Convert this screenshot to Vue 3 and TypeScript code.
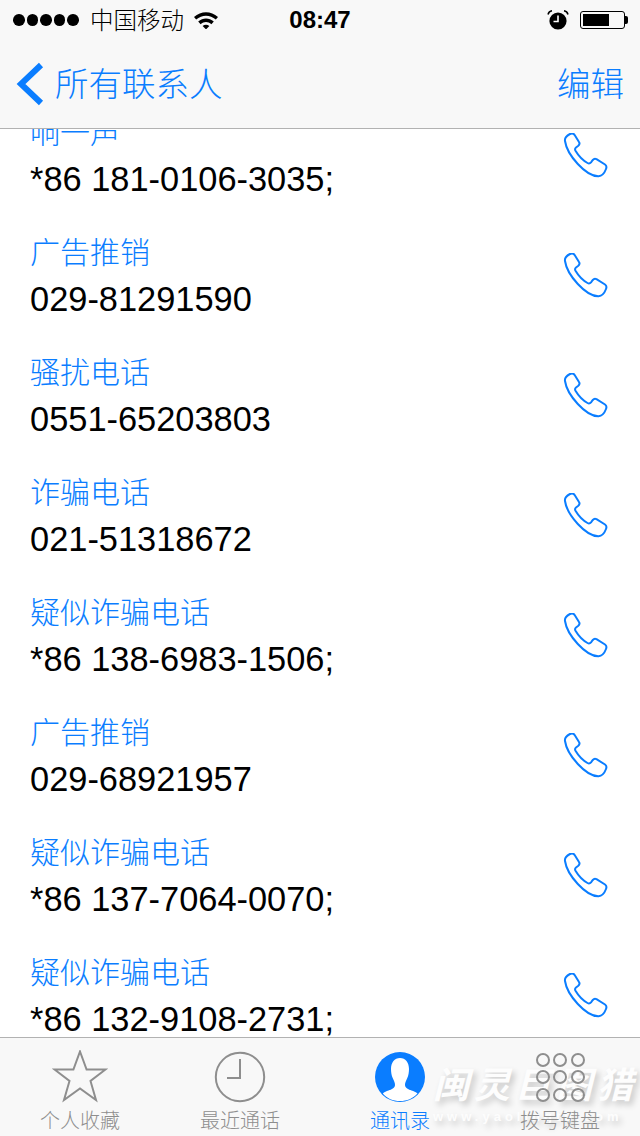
<script setup lang="ts">
interface Contact { name: string; phone: string }
const contacts: Contact[] = [
  { name: '响一声', phone: '*86 181-0106-3035;' },
  { name: '广告推销', phone: '029-81291590' },
  { name: '骚扰电话', phone: '0551-65203803' },
  { name: '诈骗电话', phone: '021-51318672' },
  { name: '疑似诈骗电话', phone: '*86 138-6983-1506;' },
  { name: '广告推销', phone: '029-68921957' },
  { name: '疑似诈骗电话', phone: '*86 137-7064-0070;' },
  { name: '疑似诈骗电话', phone: '*86 132-9108-2731;' },
]
const dial = [0, 1, 2, 3, 4, 5, 6, 7, 8]
</script>

<template>
  <div class="screen">
    <header class="header">
      <div class="status">
        <div class="status-left">
          <div class="dots"><i v-for="n in 5" :key="n" class="dot"></i></div>
          <span class="carrier">中国移动</span>
          <svg class="wifi" width="26" height="18" viewBox="0 0 26 18">
            <path d="M1 6C8 -.5 18 -.5 25 6L22.8 8.6C17 3.4 9 3.4 3.2 8.6Z" fill="#000"/>
            <path d="M5.2 10.6C10 6.4 16 6.4 20.8 10.6L18.4 13.2C15 10.4 11 10.4 7.6 13.2Z" fill="#000"/>
            <path d="M9.6 15C11.8 13.4 14.2 13.4 16.4 15L13 18.4Z" fill="#000"/>
          </svg>
        </div>
        <span class="time">08:47</span>
        <div class="status-right">
          <svg width="22" height="20" viewBox="0 0 22 20">
            <circle cx="11" cy="11" r="8.6" fill="#000"/>
            <path d="M11 5.5V11.5H6.5" stroke="#fff" stroke-width="1.6" fill="none"/>
            <path d="M1 4.5C1.5 2.5 3 1 5 .8M21 4.5C20.5 2.5 19 1 17 .8" stroke="#000" stroke-width="1.5" fill="none"/>
          </svg>
          <div class="battery"><div class="battery-fill"></div></div>
        </div>
      </div>
      <nav class="nav">
        <div class="back">
          <svg width="28" height="44" viewBox="0 0 28 44">
            <path d="M25 3L5 22L25 41" fill="none" stroke="#0a7dff" stroke-width="6"/>
          </svg>
          <span>所有联系人</span>
        </div>
        <span class="edit">编辑</span>
      </nav>
    </header>

    <main class="list">
      <div class="list-inner">
        <div v-for="(c, i) in contacts" :key="i" class="row">
          <div class="info">
            <div class="name">{{ c.name }}</div>
            <div class="phone">{{ c.phone }}</div>
          </div>
          <svg class="call" width="46" height="46" viewBox="0 1 46 46">
            <path d="M3 9C2.5 6 5 3.5 8 2C10 1 11.5 1.5 12.5 2.8L17 10C18 11.5 17.5 12.8 16 14L14 15.5C13 16.3 12.8 17.5 13.5 18.8C16 23 21 28.5 25.5 31C26.8 31.7 28 31.5 29 30.3L30.8 28C31.8 26.8 33 26.4 34.5 27.2L43 32.5C44.5 33.5 44.8 35 44 37C42.5 41 39.5 44 36.5 44.2C24 44.5 5 23 3 9Z" fill="none" stroke="#0a7dff" stroke-width="2"/>
          </svg>
        </div>
      </div>
    </main>

    <footer class="tabs">
      <div class="watermark" aria-hidden="true">
        <div class="wm-title">闽灵巨图猎</div>
        <div class="wm-url">www.yaolingtu.com</div>
      </div>
      <div class="tab">
        <svg width="56" height="54" viewBox="0 1.5 56 54">
          <path d="M28 3L34.6 21H53.5L38.5 32.5L44 51.5L28 40L12 51.5L17.5 32.5L2.5 21H21.4Z" fill="none" stroke="#8e8e8e" stroke-width="2"/>
        </svg>
        <span>个人收藏</span>
      </div>
      <div class="tab">
        <svg width="54" height="54" viewBox="0 0 54 54">
          <circle cx="27" cy="27" r="24.2" fill="none" stroke="#8e8e8e" stroke-width="2"/>
          <path d="M27 9V28H14" fill="none" stroke="#8e8e8e" stroke-width="2"/>
        </svg>
        <span>最近通话</span>
      </div>
      <div class="tab active">
        <svg width="54" height="54" viewBox="0 0 54 54">
          <circle cx="27" cy="27" r="25" fill="#0a7dff"/>
          <path d="M27 8C32.5 8 36 12.5 36 19C36 22 35.5 25.5 34.3 28C33 31 32 32.5 32 35C32 38 35.5 39.5 38.5 40.5C40.5 41.2 43 42 44.5 43.5C40 48.5 34 51 27 51C20 51 14 48.5 9.8 43.5C11.2 42 13.5 41.2 15.5 40.5C18.5 39.5 22 38 22 35C22 32.5 21 31 19.7 28C18.5 25.5 18 22 18 19C18 12.5 21.5 8 27 8Z" fill="#fff"/>
        </svg>
        <span>通讯录</span>
      </div>
      <div class="tab">
        <div class="dial"><i v-for="d in dial" :key="d"></i></div>
        <span>拨号键盘</span>
      </div>
    </footer>
  </div>
</template>

<style>
html, body { margin: 0; background: #fff; }
</style>

<style scoped>
.screen {
  width: 640px;
  height: 1136px;
  display: flex;
  flex-direction: column;
  overflow: hidden;
  font-family: "Liberation Sans", "Noto Sans CJK SC", sans-serif;
  background: #fff;
}
.header {
  height: 128px;
  flex: none;
  background: #f8f8f8;
  border-bottom: 1px solid #b2b2b2;
  color: #000;
}
.status {
  height: 40px;
  position: relative;
  display: flex;
  align-items: center;
  justify-content: space-between;
  padding: 0 15px 0 13px;
}
.status-left { display: flex; align-items: center; }
.dots { display: flex; gap: 2px; width: 67px; }
.dot { width: 11.6px; height: 11.6px; border-radius: 50%; background: #000; display: block; }
.carrier {
  margin: -3px 0 0 10px;
  font-size: 23.5px;
  font-family: "Noto Sans CJK SC", sans-serif;
  font-weight: 300;
}
.wifi { margin-left: 9px; }
.time {
  position: absolute;
  left: 0;
  right: 0;
  text-align: center;
  font-size: 24px;
  font-weight: 700;
}
.status-right { display: flex; align-items: center; gap: 11px; }
.battery {
  width: 45px;
  height: 18px;
  box-sizing: border-box;
  border: 1px solid #000;
  border-radius: 3px;
  padding: 2px;
  position: relative;
}
.battery::after {
  content: "";
  position: absolute;
  right: -4px;
  top: 4px;
  width: 3px;
  height: 8px;
  background: #000;
  border-radius: 0 2px 2px 0;
}
.battery-fill { width: 26px; height: 100%; background: #000; }
.nav {
  height: 88px;
  display: flex;
  align-items: center;
  justify-content: space-between;
  padding: 0 16px;
  color: #0a7dff;
  font-family: "Noto Sans CJK SC", sans-serif;
  font-weight: 300;
  font-size: 33.5px;
  line-height: 44px;
}
.nav span { margin-top: -4px; }
.back { display: flex; align-items: center; gap: 11px; }
.list { flex: 1; overflow: hidden; min-height: 0; }
.list-inner { margin-top: -33px; }
.row {
  height: 120px;
  display: flex;
  align-items: center;
  justify-content: space-between;
  padding: 0 32.5px 0 30px;
}
.name {
  font-family: "Noto Sans CJK SC", sans-serif;
  font-weight: 300;
  font-size: 30px;
  line-height: 46px;
  color: #0a7dff;
  margin-top: -3px;
  margin-bottom: 3px;
}
.phone { font-size: 34.4px; line-height: 46px; color: #000; }
.call { flex: none; }
.tabs {
  height: 99px;
  flex: none;
  box-sizing: border-box;
  border-top: 1px solid #b2b2b2;
  background: #f8f8f8;
  display: grid;
  grid-template-columns: repeat(4, 160px);
  position: relative;
}
.tab {
  position: relative;
  display: flex;
  flex-direction: column;
  align-items: center;
  padding-top: 12px;
  color: #8e8e8e;
  font-family: "Noto Sans CJK SC", sans-serif;
  font-weight: 300;
  font-size: 20px;
  line-height: 28px;
  gap: 2px;
}
.tab.active { color: #0a7dff; }
.dial {
  width: 54px;
  height: 54px;
  display: grid;
  grid-template-columns: repeat(3, 14px);
  grid-auto-rows: 14px;
  gap: 3.5px;
  justify-content: center;
  align-content: center;
}
.dial i {
  display: block;
  box-sizing: border-box;
  border: 2px solid #8e8e8e;
  border-radius: 50%;
}
.watermark {
  position: absolute;
  left: 433px;
  top: 22px;
  width: 200px;
  color: #fdfdfd;
  text-shadow: 3px 4px 6px rgba(0, 0, 0, .2);
  pointer-events: none;
}
.wm-title {
  font-family: "Noto Sans CJK SC", sans-serif;
  font-size: 36px;
  line-height: 44px;
  font-weight: 700;
  font-style: italic;
  white-space: nowrap;
  letter-spacing: 5px;
}
.wm-url {
  font-size: 13px;
  font-weight: 700;
  letter-spacing: 4px;
  line-height: 16px;
  margin-top: 5px;
  white-space: nowrap;
}
</style>
